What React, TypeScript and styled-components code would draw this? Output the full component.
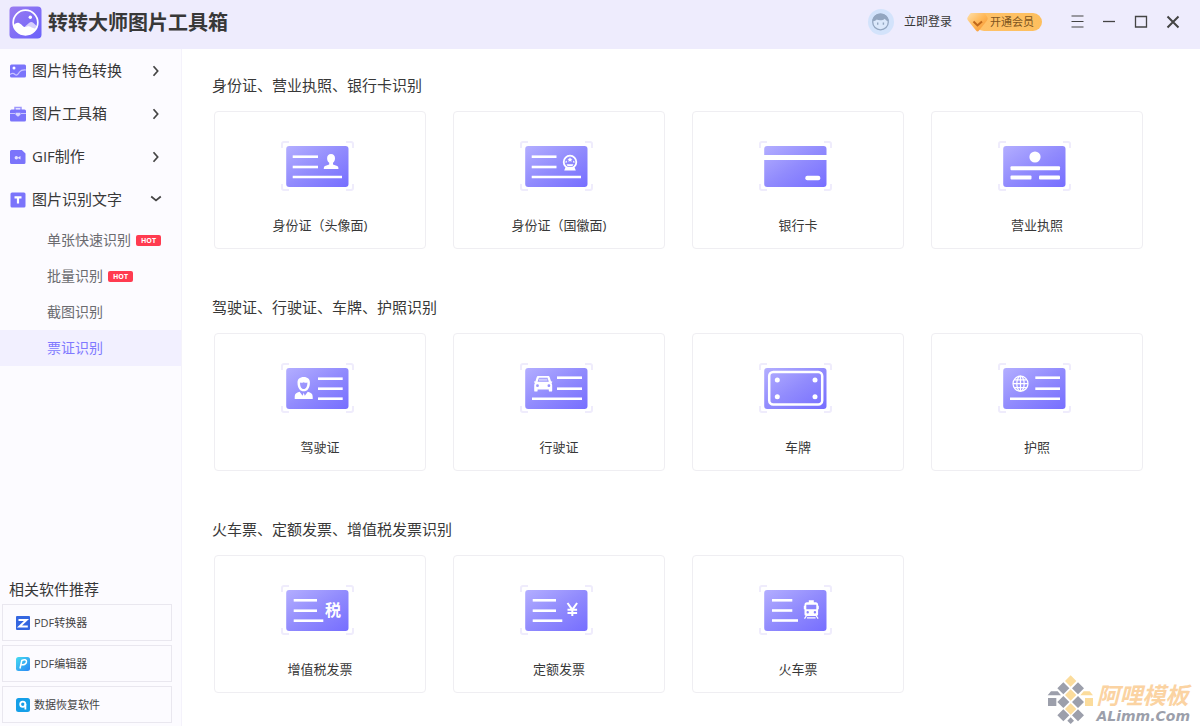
import React from 'react';
import styled, { createGlobalStyle, css } from 'styled-components';

const GlobalStyle = createGlobalStyle`
  *, *::before, *::after { box-sizing: border-box; }
  body {
    margin: 0;
    background: #fff;
    color: #383838;
    font-family: "Open Sans", "Noto Sans CJK SC", sans-serif;
  }
  button { font: inherit; color: inherit; background: none; border: 0; padding: 0; cursor: pointer; }
  a { color: inherit; text-decoration: none; }
  h1, h2, h3, ul { margin: 0; padding: 0; font-weight: 400; }
  ul { list-style: none; }
  svg { display: block; flex: none; }
`;

const Window = styled.div`
  position: relative;
  display: flex;
  flex-direction: column;
  min-height: 100vh;
`;

const TitleBar = styled.header`
  display: flex;
  align-items: center;
  height: 49px;
  padding: 0 11px 5px 9px;
  background: #eeecfd;
`;

const AppName = styled.h1`
  flex: 1;
  margin-left: 6px;
  padding-top: 2px;
  font-size: 20px;
  line-height: 28px;
  font-weight: 700;
`;

const LoginButton = styled.button`
  display: flex;
  align-items: center;
  gap: 10px;
  font-size: 12px;
  line-height: 18px;
`;

const VipButton = styled.button`
  display: flex;
  align-items: center;
  margin: 0 19px 0 15px;

  svg { position: relative; margin-right: -13px; }
`;

const VipLabel = styled.span`
  padding: 0 8px 0 15px;
  border-radius: 9px;
  background: linear-gradient(90deg, #ffc26a, #fdbf5e);
  color: #7d5420;
  font-size: 11px;
  line-height: 18px;
`;

const WindowButton = styled.button`
  display: flex;
  align-items: center;
  justify-content: center;
  width: 32px;
  height: 32px;
`;

const Body = styled.div`
  display: flex;
  flex: 1;
`;

const Sidebar = styled.aside`
  display: flex;
  flex-direction: column;
  flex: none;
  width: 182px;
  padding-bottom: 3px;
  border-right: 1px solid #f4f2fb;
  background: #fcfbff;
`;

const MenuRow = styled.button`
  display: flex;
  align-items: center;
  gap: 6px;
  width: 100%;
  height: 43px;
  padding: 0 18px 0 10px;
  font-size: 15px;
  line-height: 22px;
  text-align: left;
`;

const MenuLabel = styled.span`
  flex: 1;
  padding-bottom: 2px;
`;

const SubMenu = styled.ul`
  padding-top: 1px;
`;

const SubLink = styled.a<{ $active?: boolean }>`
  display: flex;
  align-items: center;
  gap: 5px;
  height: 36px;
  padding-left: 47px;
  color: #6b6b70;
  font-size: 14px;
  line-height: 20px;
  ${p => p.$active && css`
    background: #f2f0ff;
    color: #8079ff;
  `}
`;

const HotBadge = styled.span`
  width: 25px;
  height: 11px;
  border-radius: 2px;
  background: #ff3b50;
  color: #fff;
  font-size: 7px;
  line-height: 11px;
  font-weight: 700;
  text-align: center;
`;

const Related = styled.section`
  margin-top: auto;
  padding: 0 9px 0 2px;
`;

const RelatedTitle = styled.h2`
  padding: 0 0 4px 7px;
  font-size: 15px;
  line-height: 22px;
`;

const RelatedList = styled.ul`
  display: grid;
  gap: 4px;
`;

const RelatedLink = styled.a`
  display: flex;
  align-items: center;
  gap: 4px;
  height: 37px;
  padding-left: 13px;
  border: 1px solid #e9e7ef;
  color: #444;
  font-size: 11px;
  line-height: 16px;
`;

const Main = styled.main`
  display: flex;
  flex: 1;
  flex-direction: column;
  gap: 48px;
  padding: 26px 57px 32px 30px;
`;

const GroupTitle = styled.h2`
  padding-bottom: 16px;
  font-size: 15px;
  line-height: 20px;
`;

const CardGrid = styled.div`
  display: grid;
  grid-template-columns: repeat(4, 1fr);
  gap: 27px;
  padding-left: 2px;
`;

const Card = styled.button`
  display: flex;
  flex-direction: column;
  align-items: center;
  gap: 24px;
  padding: 29px 0 13px;
  border: 1px solid #efeef2;
  border-radius: 4px;
  font-size: 13px;
  line-height: 20px;
`;

const Watermark = styled.div`
  position: absolute;
  right: 10px;
  bottom: 2px;
  display: flex;
  align-items: flex-end;
  gap: 3px;
`;

const WatermarkText = styled.div`
  display: flex;
  flex-direction: column;
  font-style: italic;
  font-weight: 700;
`;

const WatermarkName = styled.span`
  color: #fbd3a2;
  font-size: 23px;
  line-height: 26px;
`;

const WatermarkSite = styled.span`
  color: #9c9fab;
  font-family: "DejaVu Sans", sans-serif;
  font-size: 14px;
  line-height: 16px;
`;

const CardGradient = () => (
  <svg width="0" height="0" style={{ position: 'absolute' }} aria-hidden="true">
    <defs>
      <linearGradient id="violet" x1="0" y1="0" x2="1" y2="1">
        <stop offset="0" stopColor="#b3aeff" />
        <stop offset="0.5" stopColor="#918bfd" />
        <stop offset="1" stopColor="#766eff" />
      </linearGradient>
    </defs>
  </svg>
);

type LineSpec = [number, number, number];

const Lines = ({ rows, w = 2.6 }: { rows: LineSpec[]; w?: number }) => (
  <g stroke="#fff" strokeWidth={w}>
    {rows.map(([x1, x2, y], i) => <line key={i} x1={x1} x2={x2} y1={y} y2={y} />)}
  </g>
);

const CardArt = ({ children }: { children: React.ReactNode }) => (
  <svg width="78" height="50" viewBox="0 0 78 50" aria-hidden="true">
    <path
      d="M1 7V3a2 2 0 0 1 2-2h5M65 1h5a2 2 0 0 1 2 2v4M72 43v4a2 2 0 0 1-2 2h-5M8 49H3a2 2 0 0 1-2-2v-4"
      fill="none" stroke="#efecfc" strokeWidth="2"
    />
    <rect x="5.2" y="5" width="62.3" height="41" rx="3" fill="url(#violet)" />
    {children}
  </svg>
);

const art: Record<string, React.ReactNode> = {
  portrait: <>
    <Lines rows={[[11.7, 37, 15.7], [11.7, 37, 26], [11.7, 61, 36]]} />
    <path fill="#fff" d="M50 13c2.6 0 4 1.8 4 4.2 0 1.9-.8 3.6-2 4.6v1.7l4.2 1.6c.8.4 1.2 1 1.2 1.9v1H42.800v-1c0-.9.4-1.500 1.200-1.900l4.200-1.600v-1.700c-1.300-1-2.100-2.700-2.100-4.600 0-2.400 1.400-4.200 3.900-4.200z" />
  </>,
  emblem: <>
    <Lines rows={[[11.7, 36.5, 15.7], [11.7, 36.5, 26], [11.7, 61, 36]]} />
    <circle cx="50" cy="21" r="6.300" fill="none" stroke="#fff" strokeWidth="1.800" />
    <path fill="#fff" d="M50 16.200l.8 1.500 1.700.2-1.200 1.200.3 1.700-1.600-.8-1.600.8.3-1.700-1.200-1.200 1.700-.2zM46 19.500l1 .9-.4 1.400-1.300-.4zM54 19.500l-1 .9.4 1.400 1.300-.4zM46.500 23.200h7l-1.200 2h-4.600zM45.600 26h8.800l1.400 3.400H44.200z" />
  </>,
  bank: <>
    <rect x="4" y="14" width="65" height="5" fill="#fff" />
    <rect x="46.3" y="34.7" width="15" height="4.6" rx="2" fill="#fff" />
  </>,
  license: <>
    <circle cx="37" cy="16" r="5.6" fill="#fff" />
    <g fill="#fff">
      <rect x="12.5" y="25.3" width="49.5" height="4" rx="1" />
      <rect x="12.5" y="34.5" width="21" height="4" rx="1" />
      <rect x="41" y="34.5" width="21" height="4" rx="1" />
    </g>
  </>,
  driver: <>
    <Lines rows={[[37, 61.7, 15.7], [37, 61.7, 25.7], [37, 61.7, 35.7]]} />
    <path fill="#fff" fillRule="evenodd" d="M22.700 14c4 0 6.200 2.200 6.200 5.600 0 2.600-.5 5-1.900 6.600-1 1.300-2.500 2.100-4.300 2.100s-3.300-.8-4.300-2.100c-1.400-1.600-1.900-4-1.900-6.600 0-3.400 2.200-5.600 6.200-5.600zM19 19.400c0 3.800 1.300 6.600 3.700 6.600s3.700-2.800 3.700-6.600c-1.200.5-2 .5-3.700-.2-1.700.7-2.500.7-3.700.2z" />
    <path fill="#fff" d="M18.600 28.800l3 4 1.100-3 1.100 3 3-4c3.300.7 4.900 2.200 4.900 4.900v2.300h-18v-2.300c0-2.700 1.600-4.200 4.900-4.900z" />
  </>,
  vehicle: <>
    <Lines rows={[[37, 62, 14.7], [37, 62, 25.7], [12, 62, 35.7]]} />
    <path fill="#fff" fillRule="evenodd" d="M18.500 13h9.400c1 0 1.600.5 1.900 1.400l1.300 4 1-.2c.4.800 0 1.500-.6 1.800.5.800.7 1.600.7 2.600v4.800c0 .8-.4 1.200-1.100 1.200h-1.200c-.7 0-1.100-.4-1.100-1.200v-.8H17.600v.8c0 .8-.4 1.200-1.100 1.200h-1.200c-.7 0-1.100-.4-1.100-1.200v-4.800c0-1 .2-1.800.7-2.600-.6-.3-1-1-.6-1.800l1 .2 1.300-4c.3-.9.900-1.400 1.900-1.400zm.4 1.700L17.600 18.800h11.200l-1.300-4.100zM17.500 21.300a1.400 1.400 0 1 0 0 2.800 1.400 1.400 0 0 0 0-2.800zm11.400 0a1.400 1.400 0 1 0 0 2.800 1.400 1.400 0 0 0 0-2.800z" />
    <path stroke="#fff" strokeWidth="2" opacity=".5" d="M19 16.800h8.400" />
  </>,
  plate: <>
    <rect x="10.200" y="9" width="53" height="32.500" rx="4" fill="none" stroke="#fff" strokeWidth="2.500" />
    <g fill="#fff">
      <circle cx="18.300" cy="17" r="2.500" /><circle cx="56" cy="17" r="2.500" />
      <circle cx="18.300" cy="33.700" r="2.500" /><circle cx="56" cy="33.700" r="2.500" />
    </g>
  </>,
  passport: <>
    <Lines rows={[[37.3, 62, 14.7], [37.3, 62, 25.7], [12, 62, 35.7]]} />
    <g fill="none" stroke="#fff" strokeWidth="1.200">
      <circle cx="22.500" cy="20.700" r="7.500" />
      <ellipse cx="22.500" cy="20.700" rx="3.700" ry="7.500" />
      <path d="M22.500 13.200v15M15 20.700h15M16.300 16.800h12.400M16.300 24.600h12.400" />
    </g>
  </>,
  tax: <>
    <Lines rows={[[12.7, 36, 15.3], [12.7, 36, 25.7], [12.7, 42.3, 35.7]]} />
    <text x="52" y="31" fill="#fff" fontSize="16" fontWeight="700" textAnchor="middle">税</text>
  </>,
  quota: <>
    <Lines rows={[[12.7, 36, 15.3], [12.7, 36, 25.7], [12.7, 42.3, 35.7]]} />
    <path fill="none" stroke="#fff" strokeWidth="2" d="M47.500 18l4.800 6.700 4.800-6.700M52.300 24v7M47.500 24.800h9.600M47.500 27.900h9.600" />
  </>,
  train: <>
    <Lines rows={[[13, 33.3, 15.3], [13, 33.3, 25.5], [13, 39, 35.5]]} />
    <path fill="#fff" fillRule="evenodd" d="M49.800 15.300h5v1.900h1.800c1.600 0 2.500.9 2.500 2.500v1h.7v3.600h-.7v5c0 1-.7 1.700-1.700 1.700H47.200c-1 0-1.700-.7-1.700-1.700v-5h-.7v-3.600h.7v-1c0-1.600.9-2.500 2.500-2.500h1.800zM47.300 19.700v4.500h10v-4.500zM48.700 26a1.200 1.200 0 1 0 0 2.400 1.200 1.200 0 0 0 0-2.400zm7.200 0a1.200 1.200 0 1 0 0 2.400 1.200 1.200 0 0 0 0-2.400z" />
    <path stroke="#fff" strokeWidth="1.300" fill="none" d="M47.300 31l-1.800 2.700M57.300 31l1.800 2.700M48 32.800h8.600" />
  </>,
};

const groups = [
  {
    title: '身份证、营业执照、银行卡识别',
    cards: [['portrait', '身份证（头像面)'], ['emblem', '身份证（国徽面)'], ['bank', '银行卡'], ['license', '营业执照']],
  },
  {
    title: '驾驶证、行驶证、车牌、护照识别',
    cards: [['driver', '驾驶证'], ['vehicle', '行驶证'], ['plate', '车牌'], ['passport', '护照']],
  },
  {
    title: '火车票、定额发票、增值税发票识别',
    cards: [['tax', '增值税发票'], ['quota', '定额发票'], ['train', '火车票']],
  },
];

const Chevron = ({ open }: { open?: boolean }) => (
  <svg width="14" height="14" viewBox="0 0 14 14" fill="none" stroke="#444" strokeWidth="1.700" aria-hidden="true">
    <path d={open ? 'M2.200 3.500l4.800 4 4.800-4' : 'M4.500 2.200l4.200 4.800-4.200 4.800'} />
  </svg>
);

const menuIcons = {
  effects: (
    <svg width="16" height="16" viewBox="0 0 16 16" aria-hidden="true">
      <rect y="1.500" width="16" height="13" rx="1.500" fill="#7b74fb" />
      <circle cx="4" cy="5" r="1.500" fill="#fff" />
      <path d="M0 11.500c2-1.500 3.500-1.500 5 0 2 1.500 3.300-.5 4.500-2.500C11 7 13 6.700 16 7" fill="none" stroke="#c9c5ff" strokeWidth="1.200" />
    </svg>
  ),
  toolbox: (
    <svg width="16" height="16" viewBox="0 0 16 16" aria-hidden="true">
      <path d="M5 4V1.500h6V4" fill="none" stroke="#9d97fd" strokeWidth="1.500" />
      <rect y="3.500" width="16" height="12" rx="1.500" fill="#7b74fb" />
      <path d="M0 7.500h5M11 7.500h5" stroke="#c9c5ff" />
      <path d="M5.500 6.800h5v2L8 10.800l-2.500-2z" fill="#d9d6ff" />
    </svg>
  ),
  gif: (
    <svg width="16" height="16" viewBox="0 0 16 16" aria-hidden="true">
      <path d="M1.500 1h10.300L15.500 4.500v9a1.500 1.500 0 0 1-1.500 1.500H1.500A1.500 1.500 0 0 1 0 13.500v-11A1.500 1.500 0 0 1 1.500 1z" fill="#7b74fb" />
      <path d="M10.500 7L7.500 8.800l3 1.800z" fill="#e4e1ff" />
      <circle cx="6.300" cy="8.800" r="1.700" fill="#e4e1ff" />
    </svg>
  ),
  ocr: (
    <svg width="16" height="16" viewBox="0 0 16 16" aria-hidden="true">
      <rect x="0.500" y="0.500" width="15" height="15" rx="1.500" fill="#7b74fb" />
      <path d="M4.500 5.300h7M8 5.300v6.200" stroke="#fff" strokeWidth="2.200" fill="none" />
    </svg>
  ),
};

const softwareIcons = {
  convert: (
    <svg width="14" height="14" viewBox="0 0 14 14" aria-hidden="true">
      <rect width="14" height="14" rx="1" fill="#3466e0" />
      <path d="M2.500 4h8L3.500 10.500h8.300" fill="none" stroke="#fff" strokeWidth="2" />
    </svg>
  ),
  edit: (
    <svg width="14" height="14" viewBox="0 0 14 14" aria-hidden="true">
      <defs>
        <linearGradient id="sky" x1="0" y1="0" x2="1" y2="1">
          <stop offset="0" stopColor="#45dcf0" /><stop offset="1" stopColor="#2a86f5" />
        </linearGradient>
      </defs>
      <rect width="14" height="14" rx="2.500" fill="url(#sky)" />
      <path d="M4 11.500L5.800 3.500c2.500-1.500 5-.8 4.700 1.300-.3 2.200-2.700 3.400-4.800 2.700" fill="none" stroke="#fff" strokeWidth="1.500" />
    </svg>
  ),
  recover: (
    <svg width="14" height="14" viewBox="0 0 14 14" aria-hidden="true">
      <rect width="14" height="14" rx="2.500" fill="#159fe8" />
      <circle cx="6.800" cy="6.300" r="2.600" fill="none" stroke="#fff" strokeWidth="1.800" />
      <path d="M9.400 6v5.500" stroke="#fff" strokeWidth="1.800" />
    </svg>
  ),
};

const Logo = () => (
  <svg width="33" height="33" viewBox="0 0 33 33" aria-hidden="true">
    <defs>
      <linearGradient id="logo" x1="0" y1="0" x2="1" y2="1">
        <stop offset="0" stopColor="#9b7cf0" /><stop offset="1" stopColor="#6a62fb" />
      </linearGradient>
      <clipPath id="lens"><circle cx="16.500" cy="16.500" r="12.500" /></clipPath>
    </defs>
    <rect x="0.500" y="0.500" width="32" height="32" rx="4" fill="url(#logo)" />
    <g clipPath="url(#lens)">
      <path d="M12 24l8-7c1.500-1.300 3-1.300 4.500 0L31 23v8H10z" fill="#d7cffc" />
      <path d="M2 22c3-3.500 5.500-6 8-5 2.500.8 4 4.500 6.500 4 2-.3 3-1.500 5-.2C24 22 26 24 31 22v9H2z" fill="#fff" />
    </g>
    <circle cx="16.500" cy="16.500" r="12.300" fill="none" stroke="#fff" strokeWidth="1.700" />
    <circle cx="21.300" cy="11.300" r="1.700" fill="#fff" />
  </svg>
);

const Avatar = () => (
  <svg width="26" height="26" viewBox="0 0 26 26" aria-hidden="true">
    <circle cx="13" cy="13" r="13" fill="#d3e3fb" />
    <circle cx="12.500" cy="13" r="7.800" fill="#dbe8fb" stroke="#93a6c0" strokeWidth="1.300" />
    <path d="M4.500 12c.3-4.700 3.600-7.500 8-7.500s7.900 2.800 8.200 7.500c-1.800.2-3-.7-3.800-2.200-2 1.800-6 2-8.300.8-.8 1.200-2.200 1.700-4.100 1.400z" fill="#93a6c0" />
    <path d="M9.700 13.500v2.200M15.400 13.500v2.200" stroke="#93a6c0" strokeWidth="1.400" />
  </svg>
);

const VipGem = () => (
  <svg width="21" height="20" viewBox="0 0 21 20" aria-hidden="true">
    <defs>
      <linearGradient id="gem" x1="0" y1="0" x2="1" y2="1">
        <stop offset="0" stopColor="#ffe0a8" /><stop offset="0.500" stopColor="#ffb858" /><stop offset="1" stopColor="#f58f2a" />
      </linearGradient>
    </defs>
    <path d="M5 1h11c1 0 1.600.3 2.200 1.100l2 3c.8 1.200.7 2.300-.2 3.400l-8 10c-1 1.200-2 1.200-3 0l-8-10C.100 7.400 0 6.300.8 5.100l2-3C3.400 1.300 4 1 5 1z" fill="url(#gem)" />
    <path d="M6.500 9.500l4 4 4.500-4" fill="none" stroke="#c0681c" strokeWidth="2" />
  </svg>
);

const diamond = (x: number, y: number, r: number) => `M${x} ${y - r}L${x + r} ${y}L${x} ${y + r}L${x - r} ${y}z`;

const WatermarkLogo = () => (
  <svg width="46" height="49" viewBox="48 44 138 147" aria-hidden="true">
    <g fill="#9c9fab">
      <path d={[[97, 84], [141, 84], [97, 125], [141, 125], [97, 165], [141, 165]].map(([x, y]) => diamond(x, y, 18)).join('')} />
      <path d={diamond(119, 181, 10)} />
      <path d="M60 93h20l10 12H50zM51 113h25v24H51z" />
    </g>
    <g fill="#fbdc9c">
      <path d={[[119, 62], [119, 104], [119, 146]].map(([x, y]) => diamond(x, y, 17)).join('')} />
      <path d="M158 93h18l10 12h-38zM162 113h24v24h-24z" />
    </g>
  </svg>
);

const Glyph = ({ d, w = 1.3 }: { d: string; w?: number }) => (
  <svg width="14" height="14" viewBox="0 0 14 14" fill="none" stroke="#444" strokeWidth={w} aria-hidden="true">
    <path d={d} />
  </svg>
);

export default function App() {
  return (
    <Window>
      <GlobalStyle />
      <CardGradient />
      <TitleBar>
        <Logo />
        <AppName>转转大师图片工具箱</AppName>
        <LoginButton type="button"><Avatar />立即登录</LoginButton>
        <VipButton type="button"><VipGem /><VipLabel>开通会员</VipLabel></VipButton>
        <WindowButton type="button" aria-label="菜单"><Glyph d="M1.500 1h12M1.500 6.500h12M1.500 12h12" w={1.1} /></WindowButton>
        <WindowButton type="button" aria-label="最小化"><Glyph d="M1 6.500h12" w={1.3} /></WindowButton>
        <WindowButton type="button" aria-label="最大化"><Glyph d="M1.500 1.500h11v10.500h-11z" /></WindowButton>
        <WindowButton type="button" aria-label="关闭"><Glyph d="M1.500 1.500l11 11M12.500 1.500l-11 11" w={2} /></WindowButton>
      </TitleBar>
      <Body>
        <Sidebar>
          <nav>
            <MenuRow type="button">{menuIcons.effects}<MenuLabel>图片特色转换</MenuLabel><Chevron /></MenuRow>
            <MenuRow type="button">{menuIcons.toolbox}<MenuLabel>图片工具箱</MenuLabel><Chevron /></MenuRow>
            <MenuRow type="button">{menuIcons.gif}<MenuLabel>GIF制作</MenuLabel><Chevron /></MenuRow>
            <MenuRow type="button" aria-expanded="true">{menuIcons.ocr}<MenuLabel>图片识别文字</MenuLabel><Chevron open /></MenuRow>
            <SubMenu>
              <li><SubLink href="#single">单张快速识别<HotBadge>HOT</HotBadge></SubLink></li>
              <li><SubLink href="#batch">批量识别<HotBadge>HOT</HotBadge></SubLink></li>
              <li><SubLink href="#capture">截图识别</SubLink></li>
              <li><SubLink href="#tickets" $active aria-current="page">票证识别</SubLink></li>
            </SubMenu>
          </nav>
          <Related>
            <RelatedTitle>相关软件推荐</RelatedTitle>
            <RelatedList>
              <li><RelatedLink href="#pdf-convert">{softwareIcons.convert}PDF转换器</RelatedLink></li>
              <li><RelatedLink href="#pdf-edit">{softwareIcons.edit}PDF编辑器</RelatedLink></li>
              <li><RelatedLink href="#recovery">{softwareIcons.recover}数据恢复软件</RelatedLink></li>
            </RelatedList>
          </Related>
        </Sidebar>
        <Main>
          {groups.map(group => (
            <section key={group.title}>
              <GroupTitle>{group.title}</GroupTitle>
              <CardGrid>
                {group.cards.map(([icon, label]) => (
                  <Card key={icon} type="button">
                    <CardArt>{art[icon]}</CardArt>
                    <span>{label}</span>
                  </Card>
                ))}
              </CardGrid>
            </section>
          ))}
        </Main>
      </Body>
      <Watermark>
        <WatermarkLogo />
        <WatermarkText>
          <WatermarkName>阿哩模板</WatermarkName>
          <WatermarkSite>ALimm.Com</WatermarkSite>
        </WatermarkText>
      </Watermark>
    </Window>
  );
}
